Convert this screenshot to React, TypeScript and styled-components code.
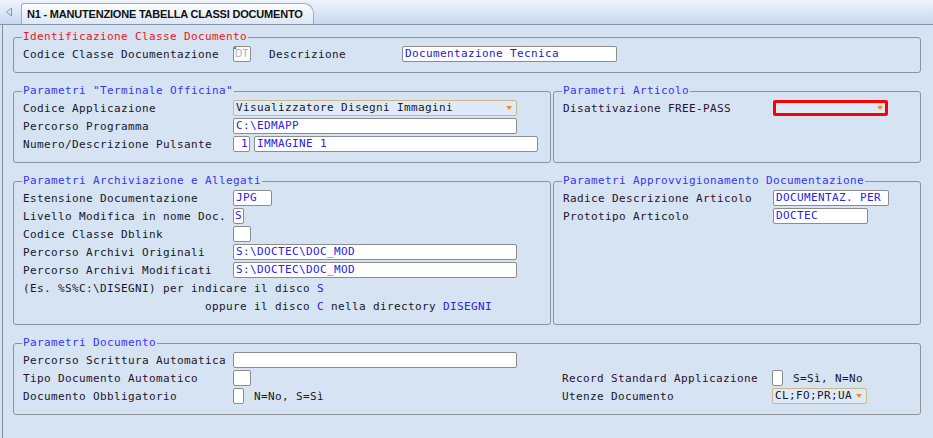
import React from "react";
import styled, { createGlobalStyle } from "styled-components";

const PAGE_BG = "#d5e3f2";

const GlobalStyle = createGlobalStyle`
  html, body {
    margin: 0;
    padding: 0;
    background: ${PAGE_BG};
  }
`;

const Screen = styled.div`
  width: 933px;
  height: 438px;
  overflow: hidden;
  display: flex;
  flex-direction: column;
  background: ${PAGE_BG};
  font-family: "DejaVu Sans Mono", "Liberation Mono", monospace;
  font-size: 11px;
  letter-spacing: 0.38px;
  color: #17172b;
`;

const TabBar = styled.div`
  flex: none;
  height: 24px;
  display: flex;
  align-items: flex-end;
  gap: 7px;
  padding-left: 4px;
  background: linear-gradient(#eef4fc, #c8d8ee);
  border-bottom: 1px solid #8393a9;
`;

const NavArrow = styled.svg`
  align-self: center;
  width: 10px;
  height: 10px;
`;

const Tab = styled.div`
  height: 21px;
  box-sizing: border-box;
  padding: 0 10px 0 5px;
  line-height: 20px;
  font-family: "Liberation Sans", Arial, sans-serif;
  font-size: 11px;
  font-weight: bold;
  letter-spacing: -0.2px;
  color: #111;
  background: linear-gradient(#fbfdff, #dce7f5);
  border: 1px solid #9aadc6;
  border-bottom: none;
  border-radius: 3px 10px 0 0;
`;

const Panel = styled.div`
  flex: 1;
  margin-left: 2px;
  border-left: 1px solid #8a9099;
  padding: 12px 0 0 10px;
`;

const Stack = styled.div`
  width: 908px;
  display: flex;
  flex-direction: column;
  gap: 18px;
`;

const Columns = styled.div`
  display: grid;
  grid-template-columns: 538px 368px;
  column-gap: 2px;
  row-gap: 18px;
`;

const Group = styled.section`
  border: 1px solid #8e939a;
  border-radius: 3px;
  padding: 0 9px 9px;
`;

const GroupTitle = styled.div<{ $alert?: boolean }>`
  width: fit-content;
  height: 14px;
  line-height: 14px;
  margin: -8px 0 1px -1px;
  padding: 0 1px;
  background: ${PAGE_BG};
  color: ${({ $alert }) => ($alert ? "#f01414" : "#3a34f2")};
`;

const SplitRows = styled.div`
  display: grid;
  grid-template-columns: 539px 1fr;
`;

const Row = styled.div<{ $indent?: number }>`
  display: flex;
  align-items: center;
  height: 18px;
  white-space: pre;
  padding-left: ${({ $indent }) => $indent ?? 0}px;
`;

const Label = styled.span<{ $w?: number; $plum?: boolean }>`
  flex: none;
  width: ${({ $w }) => $w ?? 210}px;
  color: ${({ $plum }) => ($plum ? "#2c1030" : "#17172b")};
`;

const SideLabel = styled(Label)`
  margin-left: 18px;
`;

const Field = styled.div<{ $w: number; $narrow?: boolean; $right?: boolean }>`
  flex: none;
  position: relative;
  width: ${({ $w }) => $w}px;
  height: 16px;
  box-sizing: border-box;
  padding: ${({ $narrow }) => ($narrow ? "0 1px" : "0 2px")};
  line-height: 14px;
  text-align: ${({ $right }) => ($right ? "right" : "left")};
  white-space: pre;
  overflow: hidden;
  color: #2b22e8;
  background: #fff;
  border: 1px solid #8c8c8c;
  border-radius: 2px;
`;

const DisabledField = styled(Field)`
  padding: 0 1px;
  color: #a9aeb5;
  background: #fbfbfb;
  font-family: "Liberation Sans", Arial, sans-serif;
  font-size: 10px;
  letter-spacing: 0;

  &::before {
    content: "";
    position: absolute;
    left: 0;
    top: 0;
    width: 2px;
    height: 2px;
    background: #1fa83a;
  }
`;

const Combo = styled(Field)<{ $alert?: boolean }>`
  padding-right: 14px;
  color: #17172b;
  background: #deeaf8;
  border: ${({ $alert }) => ($alert ? "3px solid #ff0000" : "1px solid #c9b98a")};
  line-height: ${({ $alert }) => ($alert ? "10px" : "14px")};

  &::after {
    content: "";
    position: absolute;
    right: ${({ $alert }) => ($alert ? 2 : 4)}px;
    top: ${({ $alert }) => ($alert ? 3 : 5)}px;
    border-left: 3px solid transparent;
    border-right: 3px solid transparent;
    border-top: 4px solid #f28a1f;
  }
`;

const FieldGroup = styled.div`
  display: flex;
  gap: 4px;
`;

const Hint = styled.span`
  margin-left: 10px;
`;

const Hl = styled.span`
  color: #2b22e8;
`;

export default function App() {
  return (
    <>
      <GlobalStyle />
      <Screen>
        <TabBar>
          <NavArrow viewBox="0 0 10 10">
            <polygon points="7.5,1 2.5,5 7.5,9" fill="none" stroke="#8797ad" strokeWidth="1" />
          </NavArrow>
          <Tab>N1 - MANUTENZIONE TABELLA CLASSI DOCUMENTO</Tab>
        </TabBar>

        <Panel>
          <Stack>
            <Group>
              <GroupTitle $alert>Identificazione Classe Documento</GroupTitle>
              <Row>
                <Label>Codice Classe Documentazione</Label>
                <DisabledField $w={18}>DT</DisabledField>
                <SideLabel $w={133}>Descrizione</SideLabel>
                <Field $w={215} style={{ color: "#1d1ac8" }}>Documentazione Tecnica</Field>
              </Row>
            </Group>

            <Columns>
              <Group>
                <GroupTitle>Parametri "Terminale Officina"</GroupTitle>
                <Row>
                  <Label>Codice Applicazione</Label>
                  <Combo $w={284}>Visualizzatore Disegni Immagini</Combo>
                </Row>
                <Row>
                  <Label>Percorso Programma</Label>
                  <Field $w={284}>C:\EDMAPP</Field>
                </Row>
                <Row>
                  <Label>Numero/Descrizione Pulsante</Label>
                  <FieldGroup>
                    <Field $w={17} $narrow $right>1</Field>
                    <Field $w={284}>IMMAGINE 1</Field>
                  </FieldGroup>
                </Row>
              </Group>

              <Group>
                <GroupTitle>Parametri Articolo</GroupTitle>
                <Row>
                  <Label $plum>Disattivazione FREE-PASS</Label>
                  <Combo $w={115} $alert />
                </Row>
              </Group>

              <Group>
                <GroupTitle>Parametri Archiviazione e Allegati</GroupTitle>
                <Row>
                  <Label>Estensione Documentazione</Label>
                  <Field $w={39}>JPG</Field>
                </Row>
                <Row>
                  <Label>Livello Modifica in nome Doc.</Label>
                  <Field $w={11} $narrow>S</Field>
                </Row>
                <Row>
                  <Label>Codice Classe Dblink</Label>
                  <Field $w={18} />
                </Row>
                <Row>
                  <Label>Percorso Archivi Originali</Label>
                  <Field $w={284}>S:\DOCTEC\DOC_MOD</Field>
                </Row>
                <Row>
                  <Label>Percorso Archivi Modificati</Label>
                  <Field $w={284}>S:\DOCTEC\DOC_MOD</Field>
                </Row>
                <Row>
                  (Es. %S%C:\DISEGNI) per indicare il disco <Hl>S</Hl>
                </Row>
                <Row $indent={182}>
                  oppure il disco <Hl>C</Hl> nella directory <Hl>DISEGNI</Hl>
                </Row>
              </Group>

              <Group>
                <GroupTitle>Parametri Approvvigionamento Documentazione</GroupTitle>
                <Row>
                  <Label $plum>Radice Descrizione Articolo</Label>
                  <Field $w={116}>DOCUMENTAZ. PER</Field>
                </Row>
                <Row>
                  <Label>Prototipo Articolo</Label>
                  <Field $w={95}>DOCTEC</Field>
                </Row>
              </Group>
            </Columns>

            <Group>
              <GroupTitle>Parametri Documento</GroupTitle>
              <SplitRows>
                <Row>
                  <Label>Percorso Scrittura Automatica</Label>
                  <Field $w={284} />
                </Row>
                <Row />
                <Row>
                  <Label $plum>Tipo Documento Automatico</Label>
                  <Field $w={18} />
                </Row>
                <Row>
                  <Label $plum>Record Standard Applicazione</Label>
                  <Field $w={11} $narrow />
                  <Hint>S=Sì, N=No</Hint>
                </Row>
                <Row>
                  <Label>Documento Obbligatorio</Label>
                  <Field $w={11} $narrow />
                  <Hint>N=No, S=Sì</Hint>
                </Row>
                <Row>
                  <Label>Utenze Documento</Label>
                  <Combo $w={95}>CL;FO;PR;UA</Combo>
                </Row>
              </SplitRows>
            </Group>
          </Stack>
        </Panel>
      </Screen>
    </>
  );
}
